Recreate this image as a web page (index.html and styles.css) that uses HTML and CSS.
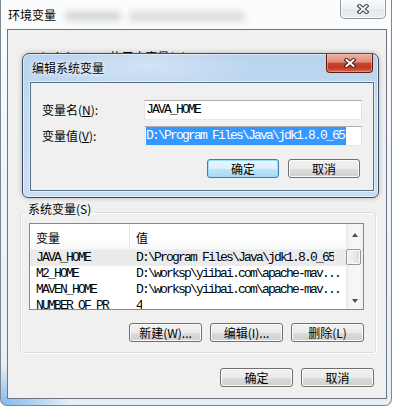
FILE: index.html
```html
<!DOCTYPE html>
<html>
<head>
<meta charset="utf-8">
<link rel="stylesheet" href="styles.css">
</head>
<body>
<div class="win">
  <div class="titlebar">
    <span class="title">环境变量</span>
    <div class="blur b1"></div>
    <div class="blur b2"></div>
    <div class="closebtn glass">
      <svg width="12" height="10" viewBox="0 0 12 10"><path d="M2.5 2 L9.5 8 M9.5 2 L2.5 8" stroke="#3c3c3c" stroke-width="4" stroke-linecap="square"/><path d="M2.5 2 L9.5 8 M9.5 2 L2.5 8" stroke="#f4f4f4" stroke-width="2" stroke-linecap="square"/></svg>
    </div>
  </div>
  <div class="client">
    <div class="uservars">Administrator 的用户变量(U)</div>
    <fieldset class="group">
      <legend>系统变量(S)</legend>
      <div class="list">
        <div class="lv">
          <div class="lv-head"><div class="c1">变量</div><div class="c2">值</div></div>
          <div class="lv-row sel mono"><div class="c1">JAVA_HOME</div><div class="c2">D:\Program Files\Java\jdk1.8.0_65</div></div>
          <div class="lv-row mono"><div class="c1">M2_HOME</div><div class="c2">D:\worksp\yiibai.com\apache-mav...</div></div>
          <div class="lv-row mono"><div class="c1">MAVEN_HOME</div><div class="c2">D:\worksp\yiibai.com\apache-mav...</div></div>
          <div class="lv-row mono"><div class="c1">NUMBER_OF_PR</div><div class="c2">4</div></div>
        </div>
        <div class="vscroll">
          <div class="sbtn"><span class="tri up"></span></div>
          <div class="track"><div class="thumb"></div></div>
          <div class="sbtn"><span class="tri down"></span></div>
        </div>
      </div>
      <div class="btnrow">
        <div class="btn">新建(W)...</div>
        <div class="btn">编辑(I)...</div>
        <div class="btn">删除(L)</div>
      </div>
    </fieldset>
    <div class="btnrow footer">
      <div class="btn">确定</div>
      <div class="btn">取消</div>
    </div>
  </div>

  <div class="dialog">
    <div class="dlg-title">
      <span class="title">编辑系统变量</span>
      <div class="closebtn red">
        <svg width="12" height="10" viewBox="0 0 12 10"><path d="M2.5 2 L9.5 8 M9.5 2 L2.5 8" stroke="#4a1a12" stroke-width="4" stroke-linecap="square"/><path d="M2.5 2 L9.5 8 M9.5 2 L2.5 8" stroke="#ffffff" stroke-width="2" stroke-linecap="square"/></svg>
      </div>
    </div>
    <div class="dlg-client">
      <div class="field">
        <div class="lbl">变量名(<u>N</u>):</div>
        <div class="input mono">JAVA_HOME</div>
      </div>
      <div class="field second">
        <div class="lbl">变量值(<u>V</u>):</div>
        <div class="input mono"><span class="selected">D:\Program Files\Java\jdk1.8.0_65</span></div>
      </div>
      <div class="btnrow dlg-btns">
        <div class="btn default">确定</div>
        <div class="btn">取消</div>
      </div>
    </div>
  </div>
</div>
</body>
</html>
```
FILE: styles.css
```css
html, body {
  margin: 0;
  padding: 0;
}
body {
  width: 394px;
  height: 406px;
  overflow: hidden;
  background: #ffffff;
  font-family: "Noto Sans CJK SC", "Noto Sans", sans-serif;
  font-size: 12px;
  color: #000;
}
u { text-decoration: underline; text-underline-offset: 1px; }

.mono {
  font-family: "Liberation Mono", monospace;
  font-size: 13px;
  letter-spacing: -1.8px;
}

/* outer window */
.win {
  position: relative;
  width: 392px;
  height: 406px;
  box-sizing: border-box;
  border: 1px solid #7d8893;
  border-top: none;
  border-radius: 0 0 7px 7px;
  background:
    radial-gradient(ellipse 70px 40px at 0 100%, rgba(110, 175, 240, 0.85), rgba(110, 175, 240, 0) 100%),
    linear-gradient(#fbfcfd, #f0f3f6 50%, #e9eef3);
}
.titlebar {
  position: relative;
  height: 29px;
  box-sizing: border-box;
  padding: 7px 0 0 7px;
  line-height: 16px;
}
.title {
  position: relative;
  z-index: 1;
  text-shadow: 0 0 6px #fff, 0 0 3px #fff;
}
.blur {
  position: absolute;
  background: #a9adb2;
  filter: blur(3px);
  opacity: 0.45;
  border-radius: 4px;
}
.b1 { left: 64px; top: 11px; width: 56px; height: 10px; }
.b2 { left: 128px; top: 11px; width: 116px; height: 11px; opacity: 0.35; }

.closebtn {
  position: absolute;
  top: 0;
  display: flex;
  align-items: center;
  justify-content: center;
  box-sizing: border-box;
}
.closebtn.glass {
  right: 5px;
  width: 46px;
  height: 19px;
  border: 1px solid #8e979f;
  border-top: none;
  border-radius: 0 0 5px 5px;
  background: linear-gradient(#f7f9fb, #eef1f4 50%, #e3e7eb 51%, #eceff2);
  box-shadow: inset 0 0 0 1px rgba(255,255,255,0.7);
}
.closebtn.red {
  right: 5px;
  width: 47px;
  height: 19px;
  border: 1px solid #5e1c12;
  border-top: none;
  border-radius: 0 0 4px 4px;
  background: linear-gradient(#ebb2a4 0%, #dc8c78 45%, #c5432c 52%, #bf3a26 75%, #d26a52 100%);
  box-shadow: inset 0 0 0 1px rgba(255, 200, 180, 0.45);
}

.client {
  margin-left: 6px;
  width: 380px;
  height: 370px;
  box-sizing: border-box;
  border: 1px solid #6a7580;
  background: #f0f0f0;
  display: flex;
  flex-direction: column;
}
.uservars {
  margin: 19px 0 0 22px;
  line-height: 16px;
}

/* group box */
.group {
  margin: 138px 0 0 12px;
  width: 356px;
  min-width: 0;
  box-sizing: border-box;
  padding: 2px 11px 10px 8px;
  border: 1px solid #d5dfe5;
  border-radius: 3px;
  box-shadow: inset 1px 1px 0 #ffffff, 1px 1px 0 #ffffff;
}
.group legend {
  padding: 0 2px 6px 2px;
  margin-left: -3px;
  line-height: 12px;
}

.list {
  display: flex;
  height: 87px;
  box-sizing: border-box;
  border: 1px solid #828790;
  background: #ffffff;
  overflow: hidden;
}
.lv {
  flex: 1;
  min-width: 0;
  overflow: hidden;
}
.lv-head {
  display: flex;
  height: 26px;
  box-sizing: border-box;
  padding-top: 3px;
  line-height: 22px;
  background: linear-gradient(#ffffff, #ffffff 60%, #f7f8f9);
  border-bottom: 1px solid #f0f0f0;
}
.lv-head .c1 {
  border-right: 1px solid #e3e5e8;
  margin-top: -3px;
  padding-top: 3px;
}
.c1 {
  width: 93px;
  padding-left: 6px;
  flex: none;
  white-space: nowrap;
  overflow: hidden;
}
.c2 {
  padding-left: 6px;
  white-space: nowrap;
  overflow: hidden;
}
.lv-row {
  display: flex;
  height: 16px;
  line-height: 16px;
}
.lv-row .c1 { width: 94px; }
.lv-row.sel { background: #ebebeb; }

.vscroll {
  width: 17px;
  flex: none;
  display: flex;
  flex-direction: column;
  background: linear-gradient(90deg, #e7e7e7, #f4f4f4 20%, #f7f7f7 80%, #ececec);
}
.sbtn {
  height: 17px;
  flex: none;
  display: flex;
  align-items: center;
  justify-content: center;
}
.tri {
  width: 0;
  height: 0;
  border-left: 3.5px solid transparent;
  border-right: 3.5px solid transparent;
}
.tri.up { border-bottom: 4px solid #4e4e4e; margin-top: 4px; }
.tri.down { border-top: 4px solid #4e4e4e; margin-top: 0; }
.track {
  flex: 1;
  padding-top: 8px;
}
.thumb {
  width: 15px;
  height: 16px;
  box-sizing: border-box;
  border: 1px solid #979797;
  border-radius: 2px;
  background: linear-gradient(90deg, #f3f3f3, #ebebeb 50%, #d9d9d9);
  box-shadow: inset 0 0 0 1px #fafafa;
}

/* buttons */
.btnrow {
  display: flex;
  justify-content: flex-end;
  gap: 8px;
}
.group .btnrow { margin-top: 13px; }
.footer { margin-top: 15px; padding-right: 12px; }
.btn {
  width: 73px;
  height: 19px;
  box-sizing: border-box;
  border: 1px solid #707070;
  border-radius: 3px;
  background: linear-gradient(#f2f2f2 0%, #ebebeb 50%, #dddddd 51%, #cfcfcf 100%);
  box-shadow: inset 0 0 0 1px #fbfbfb;
  text-align: center;
  line-height: 17px;
  white-space: nowrap;
}
.btn.default {
  border-color: #3c7fb1;
  background: linear-gradient(#eaf6fd 0%, #d9f0fc 50%, #bee6fd 51%, #a7d9f5 100%);
  box-shadow: inset 0 0 0 1px #9fdcf8;
}

/* nested dialog */
.dialog {
  position: absolute;
  left: 21px;
  top: 53px;
  width: 357px;
  height: 145px;
  box-sizing: border-box;
  border: 1px solid #3f5064;
  border-radius: 7px 7px 6px 6px;
  background:
    radial-gradient(ellipse 110px 22px at 35% 12px, rgba(255,255,255,0.35), rgba(255,255,255,0)),
    linear-gradient(180deg, #b9d3ee 0%, #c1d9f1 30%, #c9def4 100%);
  box-shadow: 0 0 5px rgba(0, 0, 0, 0.25), inset 0 0 0 1px rgba(255,255,255,0.5);
  display: flex;
  flex-direction: column;
}
.dlg-title {
  position: relative;
  height: 28px;
  flex: none;
  box-sizing: border-box;
  padding: 6px 0 0 9px;
  line-height: 16px;
}
.dlg-client {
  margin-left: 7px;
  width: 344px;
  height: 109px;
  box-sizing: border-box;
  border: 1px solid #566d86;
  background: #f0f0f0;
  padding: 17px 11px 0 11px;
  display: flex;
  flex-direction: column;
  box-shadow: 0 0 0 1px rgba(255,255,255,0.55);
}
.field {
  display: flex;
  align-items: center;
  height: 20px;
}
.field.second { margin-top: 6px; }
.lbl {
  width: 102px;
  flex: none;
  line-height: 16px;
}
.input {
  width: 218px;
  height: 20px;
  box-sizing: border-box;
  border: 1px solid;
  border-color: #abadb3 #dbdfe6 #e3e9ef #e2e3ea;
  background: #ffffff;
  padding: 0 0 0 1px;
  line-height: 18px;
  white-space: nowrap;
  overflow: hidden;
}
.selected {
  display: inline-block;
  background: #3399ff;
  color: #ffffff;
  padding-right: 2px;
}
.dlg-btns {
  margin-top: 13px;
  margin-right: 2px;
  gap: 9px;
}
.dlg-btns .btn { width: 72px; }
```
